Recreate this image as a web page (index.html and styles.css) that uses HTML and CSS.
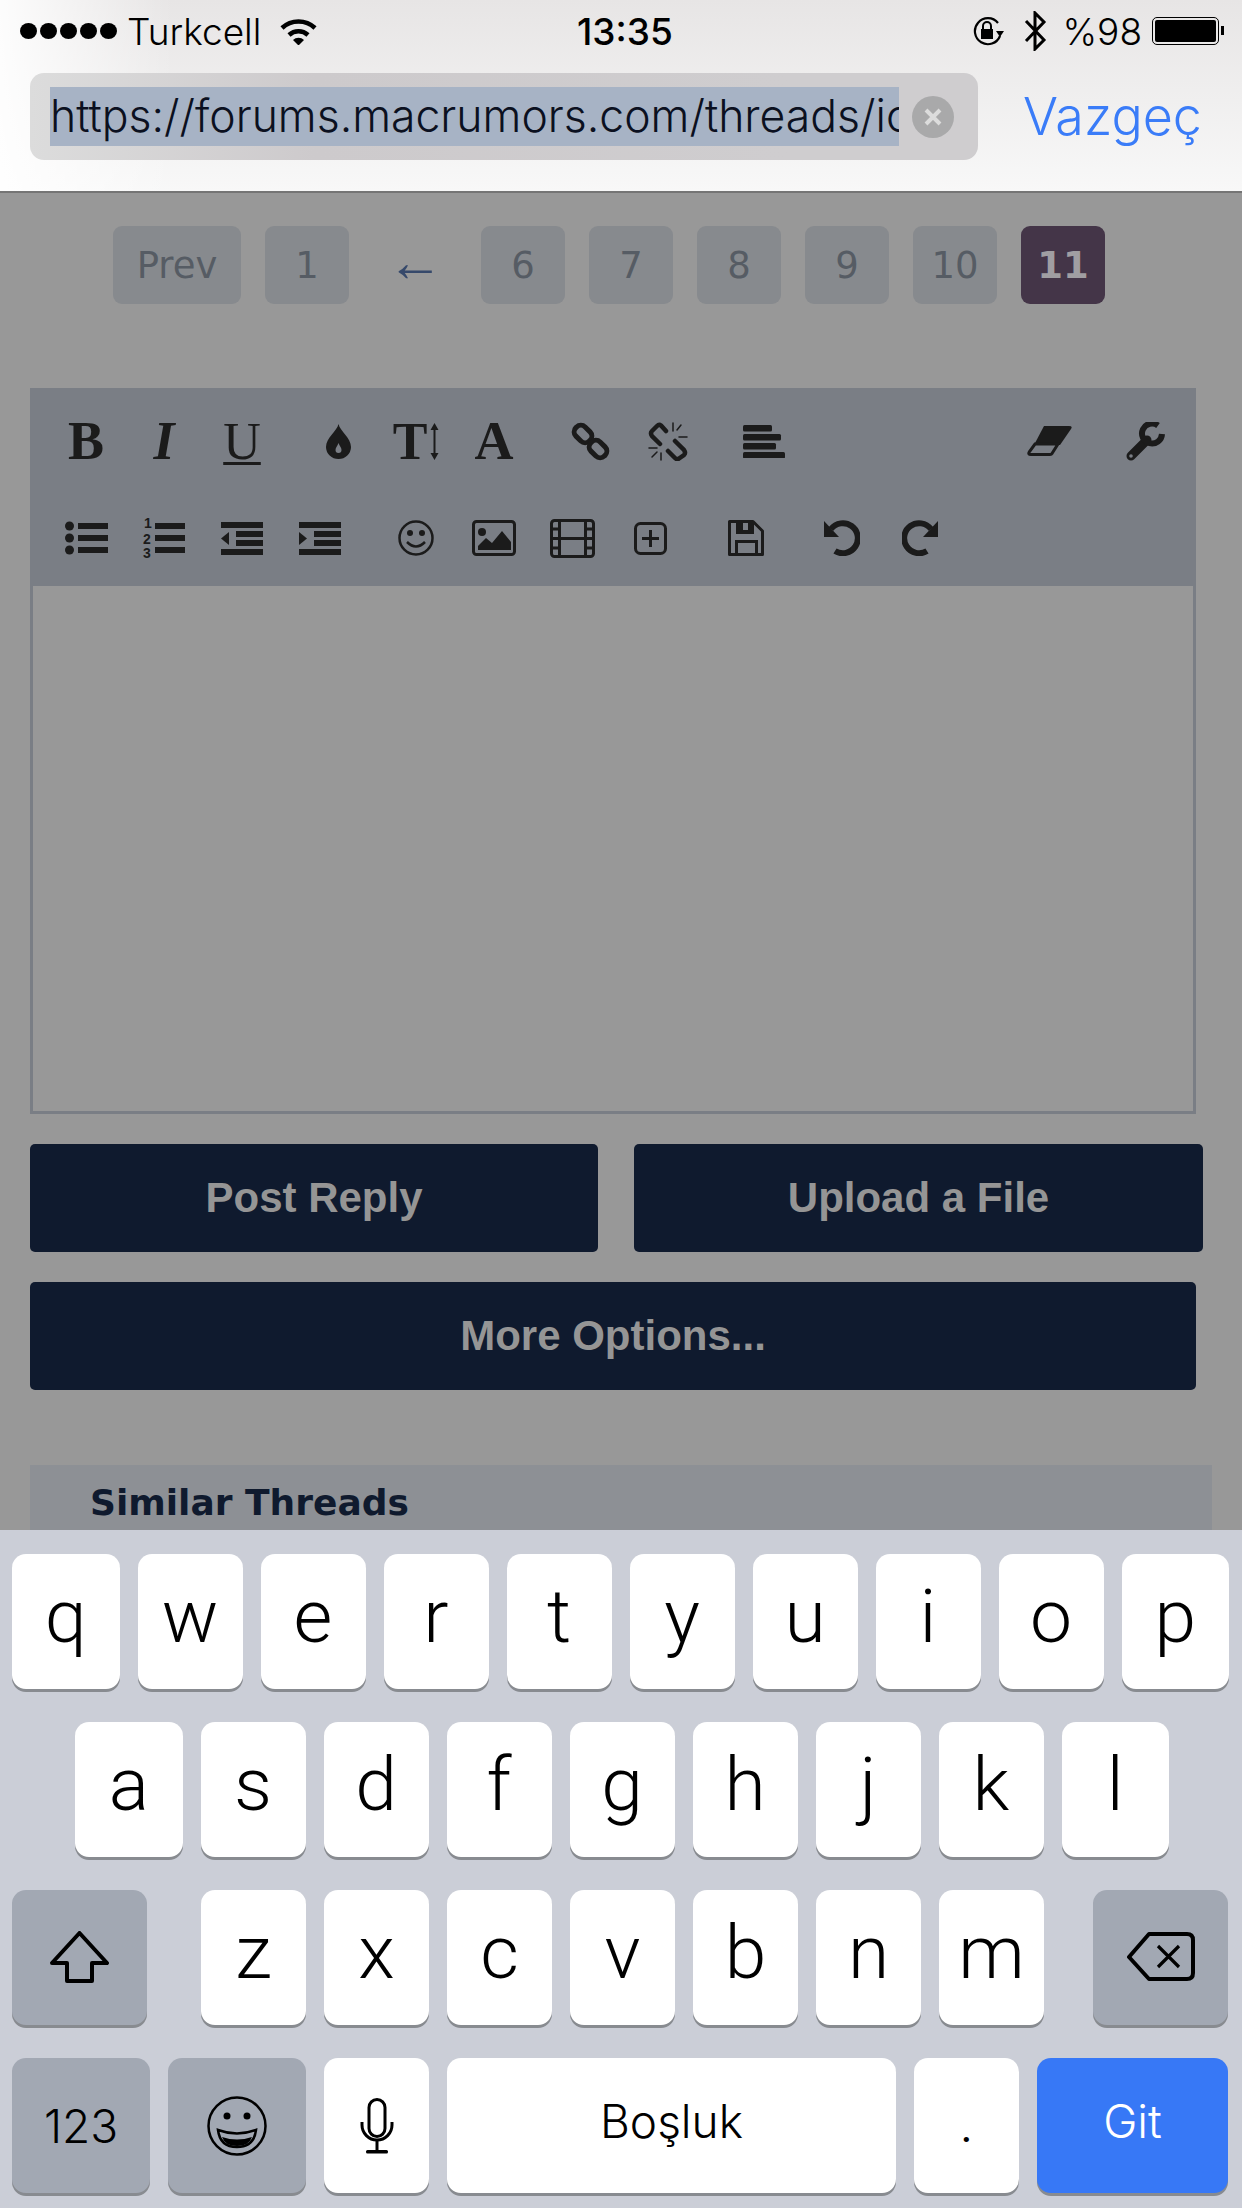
FILE: index.html
```html
<!DOCTYPE html>
<html lang="en">

<head>
    <meta charset="UTF-8">
    <meta name="viewport" content="width=device-width, initial-scale=1.0">
    <title>Forum reply</title>
    <link rel="stylesheet" href="styles.css">
</head>

<body>
    <header class="topbar">
        <div class="status">
            <div class="status-left">
                <div class="signal"><i></i><i></i><i></i><i></i><i></i></div>
                <span class="carrier">Turkcell</span>
                <svg class="wifi" viewBox="0 0 37 27">
                    <path d="M2 10A24 24 0 0 1 35 10" fill="none" stroke="#000" stroke-width="4.500"/>
                    <path d="M9 17A14 14 0 0 1 28 17" fill="none" stroke="#000" stroke-width="4.500"/>
                    <path d="M13 22A8 8 0 0 1 24 22L18.500 27.500Z"/>
                </svg>
            </div>
            <span class="clock">13:35</span>
            <div class="status-right">
                <svg class="rotlock" viewBox="0 0 33 29">
                    <path d="M27 6A13 13 0 1 0 29 19" fill="none" stroke="#000" stroke-width="2.200"/>
                    <path d="M25 14H33L29 20Z"/>
                    <path d="M12 12V9A4 4 0 0 1 20 9V12" fill="none" stroke="#000" stroke-width="2"/>
                    <rect x="10" y="12" width="12" height="10"/>
                </svg>
                <svg class="bluetooth" viewBox="0 0 24 40">
                    <path d="M3 10L21 29L12 38V2L21 11L3 30" fill="none" stroke="#000" stroke-width="3"/>
                </svg>
                <span class="percent">%98</span>
                <div class="battery"><div class="battery-fill"></div></div>
            </div>
        </div>
        <div class="urlrow">
            <div class="urlfield">
                <div class="urltext"><span class="urlclip">https://forums.macrumors.com/threads/ic</span></div>
                <svg class="clear" viewBox="0 0 42 42">
                    <circle cx="21" cy="21" r="21" fill="#a9a9aa"/>
                    <path d="M14 14L28 28M28 14L14 28" stroke="#dcdcdc" stroke-width="4"/>
                </svg>
            </div>
            <span class="cancel">Vazgeç</span>
        </div>
    </header>

    <main class="page">
        <nav class="pager">
            <a class="pg pg-prev">Prev</a>
            <a class="pg">1</a>
            <span class="pg-arrow">←</span>
            <a class="pg">6</a>
            <a class="pg">7</a>
            <a class="pg">8</a>
            <a class="pg">9</a>
            <a class="pg">10</a>
            <a class="pg pg-current">11</a>
        </nav>

        <section class="editor">
            <div class="toolbar">
                <div class="tool-row">
                    <div class="tool-group">
                        <span class="tool serif-b">B</span>
                        <span class="tool serif-i">I</span>
                        <span class="tool serif-u">U</span>
                    </div>
                    <div class="tool-group">
                        <span class="tool">
                            <svg class="ic" width="25" height="35" viewBox="0 0 25 35">
                                <path fill-rule="evenodd" d="M12.500 0C14 7 25 14 25 23A12.500 12 0 0 1 0 23C0 14 11 7 12.500 0ZM12.500 19C11.500 22 9.500 23.500 9.500 26A3 3 0 0 0 15.500 26C15.500 23.500 13.500 22 12.500 19Z"/>
                            </svg>
                        </span>
                        <span class="tool serif-t">T<svg class="ic" width="9" height="37" viewBox="0 0 9 37">
                                <path d="M4.500 0L8.500 7H5.500V30H8.500L4.500 37L0.500 30H3.500V7H0.500Z"/>
                            </svg></span>
                        <span class="tool serif-a">A</span>
                    </div>
                    <div class="tool-group">
                        <span class="tool">
                            <svg class="ic ic-line" width="39" height="39" viewBox="0 0 39 39" stroke-width="5">
                                <rect x="2.500" y="5.500" width="19" height="13" rx="6" transform="rotate(45 12 12)"/>
                                <rect x="17.500" y="20.500" width="19" height="13" rx="6" transform="rotate(45 27 27)"/>
                            </svg>
                        </span>
                        <span class="tool">
                            <svg class="ic ic-line" width="40" height="39" viewBox="0 0 40 39" stroke-linecap="round">
                                <path stroke-width="4.500" d="M18 9L13 3.500Q11 2 9 4L4 9Q2 11 4 14L12 22"/>
                                <path stroke-width="4.500" d="M27 19L36 28Q38 31 36 33L31 36.500Q29 38 27 36L20 29"/>
                                <path stroke-width="1.500" d="M25 1V9M33 3L29 8M39 15H31M1 26H9M4 35L9 30M13 38V31"/>
                            </svg>
                        </span>
                    </div>
                    <div class="tool-group">
                        <span class="tool">
                            <svg class="ic" width="42" height="33" viewBox="0 0 42 33">
                                <rect width="29" height="6.500" rx="1.500"/>
                                <rect y="9" width="38" height="6.500" rx="1.500"/>
                                <rect y="18" width="33" height="6.500" rx="1.500"/>
                                <rect y="27" width="42" height="6.500" rx="1.500"/>
                            </svg>
                        </span>
                    </div>
                    <div class="tool-group tool-group-end">
                        <span class="tool">
                            <svg class="ic" width="45" height="30" viewBox="0 0 45 30">
                                <path d="M17 0H42Q46 0 44 3L33 19H7Z"/>
                                <path d="M8 18H31L25 27.500Q24.500 28.500 23 28.500H4Q0.500 28.500 2.500 25.500Z" fill="none" stroke="#1b1b1b" stroke-width="3"/>
                            </svg>
                        </span>
                        <span class="tool">
                            <svg class="ic" width="39" height="39" viewBox="0 0 39 39">
                                <path d="M5 34L21 18" stroke="#1b1b1b" stroke-width="9" stroke-linecap="round"/>
                                <path d="M32 3.500A10 10 0 1 0 36 12" fill="none" stroke="#1b1b1b" stroke-width="6"/>
                                <circle cx="5" cy="34" r="1.800" fill="#7a7e85"/>
                            </svg>
                        </span>
                    </div>
                </div>
                <div class="tool-row">
                    <div class="tool-group">
                        <span class="tool">
                            <svg class="ic" width="43" height="34" viewBox="0 0 43 34">
                                <circle cx="4.500" cy="5" r="4.500"/>
                                <circle cx="4.500" cy="17" r="4.500"/>
                                <circle cx="4.500" cy="29" r="4.500"/>
                                <rect x="13" y="2" width="30" height="6"/>
                                <rect x="13" y="14" width="30" height="6"/>
                                <rect x="13" y="26" width="30" height="6"/>
                            </svg>
                        </span>
                        <span class="tool">
                            <svg class="ic" width="42" height="44" viewBox="0 0 42 44">
                                <text class="num" x="1" y="12">1</text>
                                <text class="num" x="0" y="28">2</text>
                                <text class="num" x="0" y="42">3</text>
                                <rect x="12" y="7" width="30" height="6"/>
                                <rect x="12" y="19" width="30" height="6"/>
                                <rect x="12" y="31" width="30" height="6"/>
                            </svg>
                        </span>
                        <span class="tool">
                            <svg class="ic" width="42" height="33" viewBox="0 0 42 33">
                                <rect width="42" height="6"/>
                                <rect x="15" y="9" width="27" height="6"/>
                                <rect x="15" y="18" width="27" height="6"/>
                                <rect y="27" width="42" height="6"/>
                                <path d="M8 10V23L0 16.500Z"/>
                            </svg>
                        </span>
                        <span class="tool">
                            <svg class="ic" width="42" height="33" viewBox="0 0 42 33">
                                <rect width="42" height="6"/>
                                <rect x="15" y="9" width="27" height="6"/>
                                <rect x="15" y="18" width="27" height="6"/>
                                <rect y="27" width="42" height="6"/>
                                <path d="M0 10V23L8 16.500Z"/>
                            </svg>
                        </span>
                    </div>
                    <div class="tool-group">
                        <span class="tool">
                            <svg class="ic" width="36" height="36" viewBox="0 0 36 36">
                                <circle cx="18" cy="18" r="16.500" fill="none" stroke="#1b1b1b" stroke-width="2.500"/>
                                <circle cx="12" cy="13" r="3"/>
                                <circle cx="24" cy="13" r="3"/>
                                <path d="M9 22Q18 31 27 22" fill="none" stroke="#1b1b1b" stroke-width="2.500"/>
                            </svg>
                        </span>
                        <span class="tool">
                            <svg class="ic" width="44" height="36" viewBox="0 0 44 36">
                                <rect x="1.500" y="1.500" width="41" height="33" rx="3" fill="none" stroke="#1b1b1b" stroke-width="3"/>
                                <circle cx="10" cy="12" r="4"/>
                                <path d="M6 30V26L14 18L20 23L30 11L39 22V30Z"/>
                            </svg>
                        </span>
                        <span class="tool">
                            <svg class="ic ic-line" width="45" height="39" viewBox="0 0 45 39" stroke-width="3">
                                <rect x="1.500" y="1.500" width="42" height="36" rx="3"/>
                                <path d="M9.500 1.500V37.500M35.500 1.500V37.500M9.500 19.500H35.500M1.500 10H9.500M1.500 19.500H9.500M1.500 29H9.500M35.500 10H43.500M35.500 19.500H43.500M35.500 29H43.500"/>
                            </svg>
                        </span>
                        <span class="tool">
                            <svg class="ic ic-line" width="33" height="33" viewBox="0 0 33 33" stroke-width="3">
                                <rect x="1.500" y="1.500" width="30" height="30" rx="5"/>
                                <path d="M16.500 8V25M8 16.500H25"/>
                            </svg>
                        </span>
                    </div>
                    <div class="tool-group">
                        <span class="tool">
                            <svg class="ic" width="36" height="36" viewBox="0 0 36 36">
                                <path d="M1.500 1.500H25L34.500 11V34.500H1.500Z" fill="none" stroke="#1b1b1b" stroke-width="3" stroke-linejoin="round"/>
                                <path fill-rule="evenodd" d="M8 2H26V14H8ZM15 3V10H20V3Z"/>
                                <path d="M8.500 34V21.500H28.500V34" fill="none" stroke="#1b1b1b" stroke-width="3"/>
                            </svg>
                        </span>
                    </div>
                    <div class="tool-group">
                        <span class="tool">
                            <svg class="ic" width="36" height="36" viewBox="0 0 36 36">
                                <path d="M7 9A15 15 0 1 1 11 31" fill="none" stroke="#1b1b1b" stroke-width="6"/>
                                <path d="M0 1V17H15Z"/>
                            </svg>
                        </span>
                        <span class="tool">
                            <svg class="ic" width="36" height="36" viewBox="0 0 36 36">
                                <path d="M29 9A15 15 0 1 0 25 31" fill="none" stroke="#1b1b1b" stroke-width="6"/>
                                <path d="M36 1V17H21Z"/>
                            </svg>
                        </span>
                    </div>
                </div>
            </div>
            <div class="editor-area"></div>
        </section>

        <div class="btn-row">
            <button class="btn btn-half">Post Reply</button>
            <button class="btn btn-half btn-wide">Upload a File</button>
        </div>
        <button class="btn btn-full">More Options...</button>

        <section class="similar">
            <h3>Similar Threads</h3>
        </section>
    </main>

    <footer class="keyboard">
        <div class="kb-row">
            <div class="key key-edge">q</div>
            <div class="key">w</div>
            <div class="key">e</div>
            <div class="key">r</div>
            <div class="key">t</div>
            <div class="key">y</div>
            <div class="key">u</div>
            <div class="key">i</div>
            <div class="key">o</div>
            <div class="key key-edge">p</div>
        </div>
        <div class="kb-row kb-row-home">
            <div class="key key-edge">a</div>
            <div class="key">s</div>
            <div class="key">d</div>
            <div class="key">f</div>
            <div class="key">g</div>
            <div class="key">h</div>
            <div class="key">j</div>
            <div class="key">k</div>
            <div class="key key-edge">l</div>
        </div>
        <div class="kb-row">
            <div class="key key-mod key-shift">
                <svg width="59" height="52" viewBox="0 0 59 52">
                    <path d="M29.500 2L57 32H42V50H17V32H2Z" fill="none" stroke="#000" stroke-width="4" stroke-linejoin="round"/>
                </svg>
            </div>
            <div class="key key-z">z</div>
            <div class="key">x</div>
            <div class="key">c</div>
            <div class="key">v</div>
            <div class="key">b</div>
            <div class="key">n</div>
            <div class="key">m</div>
            <div class="key key-mod key-shift key-back">
                <svg width="68" height="49" viewBox="0 0 68 49" fill="none" stroke="#000" stroke-width="4" stroke-linejoin="round">
                    <path d="M22 2H60Q66 2 66 8V41Q66 47 60 47H22L2 25Z"/>
                    <path stroke-width="3.200" d="M31 14L52 35M52 14L31 35"/>
                </svg>
            </div>
        </div>
        <div class="kb-row">
            <div class="key key-mod key-label key-123">123</div>
            <div class="key key-mod key-emoji">
                <svg width="60" height="60" viewBox="0 0 60 60">
                    <ellipse cx="30" cy="30" rx="28.500" ry="28.500" fill="none" stroke="#000" stroke-width="2.500"/>
                    <circle cx="20" cy="20" r="3.500"/>
                    <circle cx="40" cy="20" r="3.500"/>
                    <path d="M11 34Q30 41 49 34Q47 51 30 51Q13 51 11 34Z" fill="none" stroke="#000" stroke-width="2.500"/>
                    <path d="M15 41Q30 46 45 41Q42 50 30 50Q18 50 15 41Z"/>
                </svg>
            </div>
            <div class="key key-mic">
                <svg width="34" height="56" viewBox="0 0 34 56" fill="none" stroke="#000" stroke-width="3">
                    <rect x="9" y="1.500" width="16" height="37" rx="8"/>
                    <path d="M2 24V27A15 15 0 0 0 32 27V24"/>
                    <path d="M17 42V53"/>
                    <rect x="6" y="52" width="22" height="3.500" rx="1.500" fill="#000" stroke="none"/>
                </svg>
            </div>
            <div class="key key-label key-space">Boşluk</div>
            <div class="key key-period">.</div>
            <div class="key key-label key-go">Git</div>
        </div>
    </footer>
</body>

</html>
```

FILE: styles.css
```css
html, body {
    margin: 0;
    padding: 0;
}

body {
    width: 1242px;
    height: 2208px;
    overflow: hidden;
    display: flex;
    flex-direction: column;
    background-color: #989898;
    font-family: Inter, "Liberation Sans", sans-serif;
    color: #000;
}

/* browser chrome */
.topbar {
    height: 193px;
    box-sizing: border-box;
    flex: none;
    border-bottom: 2px solid #757575;
    background:
        linear-gradient(to right, rgba(255, 255, 255, 0.9), rgba(255, 255, 255, 0) 14%),
        linear-gradient(to bottom, #e7e5e5, #f8f8f8);
}

.status {
    height: 62px;
    display: flex;
    align-items: center;
    justify-content: space-between;
    position: relative;
    padding: 0 23px 0 20px;
    font-size: 37px;
}

.status-left,
.status-right {
    display: flex;
    align-items: center;
}

.signal {
    display: flex;
    gap: 3px;
    margin-right: 10px;
}

.signal i {
    width: 17px;
    height: 16px;
    border-radius: 50%;
    background-color: #000;
}

.carrier {
    font-weight: 300;
}

.wifi {
    width: 37px;
    height: 27px;
    margin-left: 19px;
}

.clock {
    position: absolute;
    left: 577px;
    font-weight: 500;
}

.rotlock {
    width: 33px;
    height: 29px;
}

.bluetooth {
    width: 24px;
    height: 40px;
    margin-left: 19px;
}

.percent {
    margin-left: 15px;
    font-weight: 300;
}

.battery {
    width: 67px;
    height: 28px;
    margin-left: 10px;
    padding: 2px;
    box-sizing: border-box;
    border: 1.500px solid #000;
    border-radius: 5px;
    position: relative;
}

.battery::after {
    content: "";
    position: absolute;
    right: -6px;
    top: 8px;
    width: 3px;
    height: 9px;
    background-color: #000;
}

.battery-fill {
    height: 100%;
    background-color: #000;
    border-radius: 2px;
}

.urlrow {
    display: flex;
    align-items: center;
    padding-top: 11px;
}

.urlfield {
    width: 948px;
    height: 87px;
    margin-left: 30px;
    padding-left: 20px;
    box-sizing: border-box;
    display: flex;
    align-items: center;
    border-radius: 14px;
    background: linear-gradient(to right, #dcdcdc, #cdcacc 30%, #cfcdcf 80%);
}

.urltext {
    width: 849px;
    height: 59px;
    line-height: 59px;
    overflow: hidden;
    white-space: nowrap;
    font-size: 44.500px;
    font-weight: 300;
    background-color: #a7b3c5;
    color: #0b1020;
}

.urlclip {
    display: inline-block;
}

.clear {
    width: 42px;
    height: 42px;
    margin-left: 13px;
}

.cancel {
    margin-left: 45px;
    font-size: 52px;
    font-weight: 300;
    color: #3a7cf8;
}

/* dimmed page */
.page {
    flex: 1;
    min-height: 0;
    overflow: hidden;
    font-family: "DejaVu Sans", sans-serif;
}

.pager {
    display: flex;
    margin: 33px 0 0 113px;
    gap: 24px;
}

.pg {
    width: 84px;
    height: 78px;
    display: flex;
    align-items: center;
    justify-content: center;
    border-radius: 9px;
    background-color: #878a8e;
    color: #565c64;
    font-size: 37px;
}

.pg-prev {
    width: 128px;
}

.pg-arrow {
    width: 84px;
    padding-bottom: 6px;
    box-sizing: border-box;
    display: flex;
    align-items: center;
    justify-content: center;
    font-family: "Liberation Serif", serif;
    font-size: 56px;
    color: #36496b;
}

.pg-current {
    background-color: #443548;
    color: #a09ea2;
    font-weight: bold;
}

.editor {
    width: 1166px;
    margin: 84px 0 0 30px;
}

.toolbar {
    background-color: #7a7e85;
    padding: 19px 0 14px 17px;
    box-sizing: border-box;
    height: 198px;
}

.tool-row {
    display: flex;
    gap: 18px;
    height: 68px;
    margin-bottom: 29px;
    padding-right: 12px;
}

.tool-group {
    display: flex;
}

.tool-group-end {
    margin-left: auto;
    gap: 18px;
}

.tool {
    width: 78px;
    height: 68px;
    display: flex;
    align-items: center;
    justify-content: center;
    font-family: "Liberation Serif", serif;
    font-size: 54px;
    font-weight: bold;
    color: #1b1b1b;
}

.ic {
    fill: #1b1b1b;
    flex: none;
}

.ic-line {
    fill: none;
    stroke: #1b1b1b;
}

.serif-i {
    font-style: italic;
}

.serif-u {
    font-weight: normal;
    font-size: 52px;
    text-decoration: underline;
    text-decoration-thickness: 3px;
    text-underline-offset: 3px;
}

.serif-t {
    gap: 3px;
    font-size: 52px;
}

.num {
    font-family: "Liberation Sans", sans-serif;
    font-size: 14px;
    font-weight: bold;
}

.editor-area {
    height: 528px;
    box-sizing: border-box;
    border: 3px solid #7a7e85;
    border-top: none;
}

.btn {
    display: block;
    height: 108px;
    padding: 0;
    border: none;
    border-radius: 5px;
    background-color: #0f1a2e;
    color: #959595;
    font-family: "Liberation Sans", sans-serif;
    font-size: 42px;
    font-weight: bold;
}

.btn-row {
    display: flex;
    gap: 36px;
    margin: 30px 0 0 30px;
}

.btn-half {
    width: 568px;
}

.btn-wide {
    width: 569px;
}

.btn-full {
    width: 1166px;
    margin: 30px 0 0 30px;
}

.similar {
    width: 1182px;
    height: 70px;
    margin: 75px 0 0 30px;
    padding-left: 60px;
    box-sizing: border-box;
    background-color: #8d9095;
}

.similar h3 {
    margin: 0;
    line-height: 76px;
    font-size: 36px;
    font-weight: bold;
    color: #0f1a2e;
}

/* keyboard */
.keyboard {
    flex: none;
    height: 678px;
    box-sizing: border-box;
    padding: 24px 13px 0 12px;
    display: flex;
    flex-direction: column;
    gap: 33px;
    background-color: #cbced7;
}

.kb-row {
    display: flex;
    gap: 18px;
    height: 135px;
}

.kb-row-home {
    padding-left: 63px;
}

.key {
    flex: none;
    width: 105px;
    display: flex;
    align-items: center;
    justify-content: center;
    border-radius: 14px;
    background-color: #fff;
    box-shadow: 0 3px 0 #888b90;
    font-family: Roboto, "Liberation Sans", sans-serif;
    font-size: 75px;
    font-weight: 300;
    padding-bottom: 11px;
    box-sizing: border-box;
}

.key-edge {
    width: 107.500px;
}

.key-z {
    margin-left: 36px;
}

.key-mod {
    background-color: #a2a8b3;
}

.key-shift {
    width: 135px;
    padding-bottom: 2px;
}

.key-back {
    margin-left: 31px;
}

.key-label {
    font-family: Inter, "Liberation Sans", sans-serif;
    font-size: 46px;
    font-weight: 300;
}

.key-123 {
    width: 138px;
    padding-bottom: 0;
}

.key-emoji {
    width: 138px;
    padding-bottom: 0;
}

.key-mic {
    padding-bottom: 0;
}

.key-space {
    width: 449px;
    padding-bottom: 10px;
}

.key-period {
    font-size: 46px;
    font-weight: 400;
    padding-bottom: 0;
}

.key-go {
    width: 191px;
    padding-bottom: 10px;
    background-color: #3778f6;
    color: #fff;
}
```
